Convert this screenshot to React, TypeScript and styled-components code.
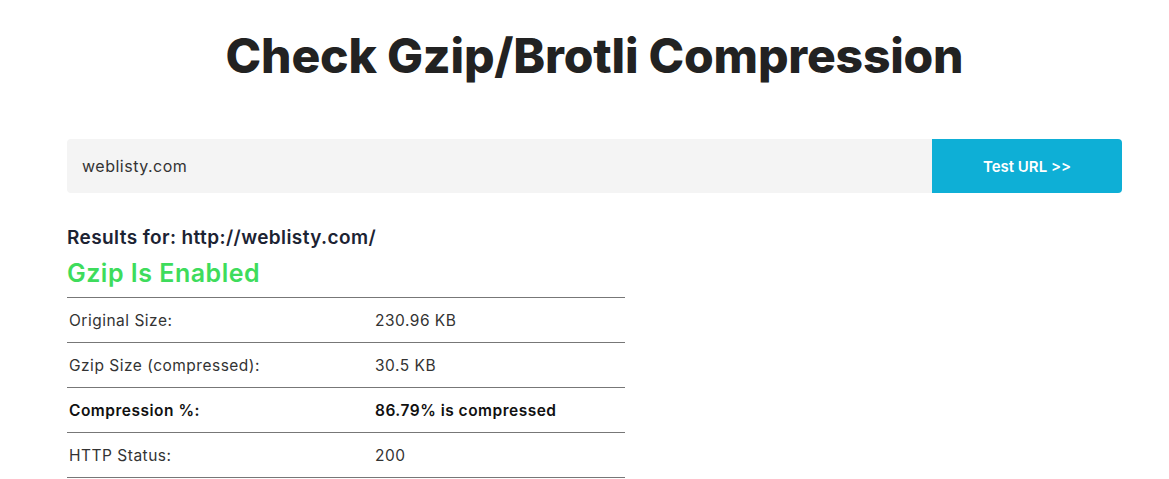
import React from "react";
import styled, { createGlobalStyle } from "styled-components";

const GlobalStyle = createGlobalStyle`
  * { box-sizing: border-box; }
  body {
    margin: 0;
    background: #fff;
    font-family: Inter, "Open Sans", sans-serif;
    color: #222;
  }
`;

interface Row {
  label: string;
  value: string;
  strong?: boolean;
}

const rows: Row[] = [
  { label: "Original Size:", value: "230.96 KB" },
  { label: "Gzip Size (compressed):", value: "30.5 KB" },
  { label: "Compression %:", value: "86.79% is compressed", strong: true },
  { label: "HTTP Status:", value: "200" },
];

const App: React.FC = () => {
  return (
    <Page>
      <GlobalStyle />
      <Title>Check Gzip/Brotli Compression</Title>
      <SearchForm onSubmit={(e) => e.preventDefault()}>
        <UrlInput defaultValue="weblisty.com" />
        <TestButton type="submit">Test URL &gt;&gt;</TestButton>
      </SearchForm>
      <Results>
        <ResultsFor>Results for: http://weblisty.com/</ResultsFor>
        <Status>Gzip Is Enabled</Status>
        <ResultTable>
          <tbody>
            {rows.map((row) => (
              <tr key={row.label}>
                <LabelCell strong={row.strong}>{row.label}</LabelCell>
                <ValueCell strong={row.strong}>{row.value}</ValueCell>
              </tr>
            ))}
          </tbody>
        </ResultTable>
      </Results>
    </Page>
  );
};

const Page = styled.div`
  width: 1055px;
  margin-left: 67px;
  padding-top: 26px;
`;

const Title = styled.h1`
  margin: 0;
  text-align: center;
  font-size: 48px;
  font-weight: 800;
  line-height: 60px;
  letter-spacing: -0.2px;
  color: #222;
`;

const SearchForm = styled.form`
  display: flex;
  margin-top: 53px;
  height: 54px;
`;

const UrlInput = styled.input`
  flex: 1;
  border: none;
  outline: none;
  background: #f4f4f4;
  border-radius: 4px 0 0 4px;
  padding: 0 15px;
  font-family: inherit;
  font-size: 16px;
  letter-spacing: 0.5px;
  color: #333;
`;

const TestButton = styled.button`
  width: 190px;
  border: none;
  background: #0eafd6;
  border-radius: 0 4px 4px 0;
  color: #fff;
  font-family: inherit;
  font-size: 15px;
  font-weight: 600;
  cursor: pointer;
`;

const Results = styled.div`
  width: 558px;
  margin-top: 32px;
`;

const ResultsFor = styled.div`
  font-size: 19px;
  font-weight: 600;
  letter-spacing: 0.4px;
  color: #1c2333;
  line-height: 26px;
`;

const Status = styled.div`
  margin-top: 6px;
  font-size: 25px;
  font-weight: 600;
  letter-spacing: 0.5px;
  color: #3edc5c;
  line-height: 32px;
`;

const ResultTable = styled.table`
  width: 100%;
  margin-top: 8px;
  border-collapse: collapse;
  border-top: 1px solid #777;

  tr {
    border-bottom: 1px solid #777;
  }
`;

const Cell = styled.td<{ strong?: boolean }>`
  height: 45px;
  font-size: 15.5px;
  letter-spacing: 0.5px;
  font-weight: ${(p) => (p.strong ? 600 : 400)};
  color: ${(p) => (p.strong ? "#111" : "#333")};
  vertical-align: middle;
`;

const LabelCell = styled(Cell)`
  width: 308px;
  padding: 0 2px;
`;

const ValueCell = styled(Cell)`
  padding: 0;
`;

export default App;
